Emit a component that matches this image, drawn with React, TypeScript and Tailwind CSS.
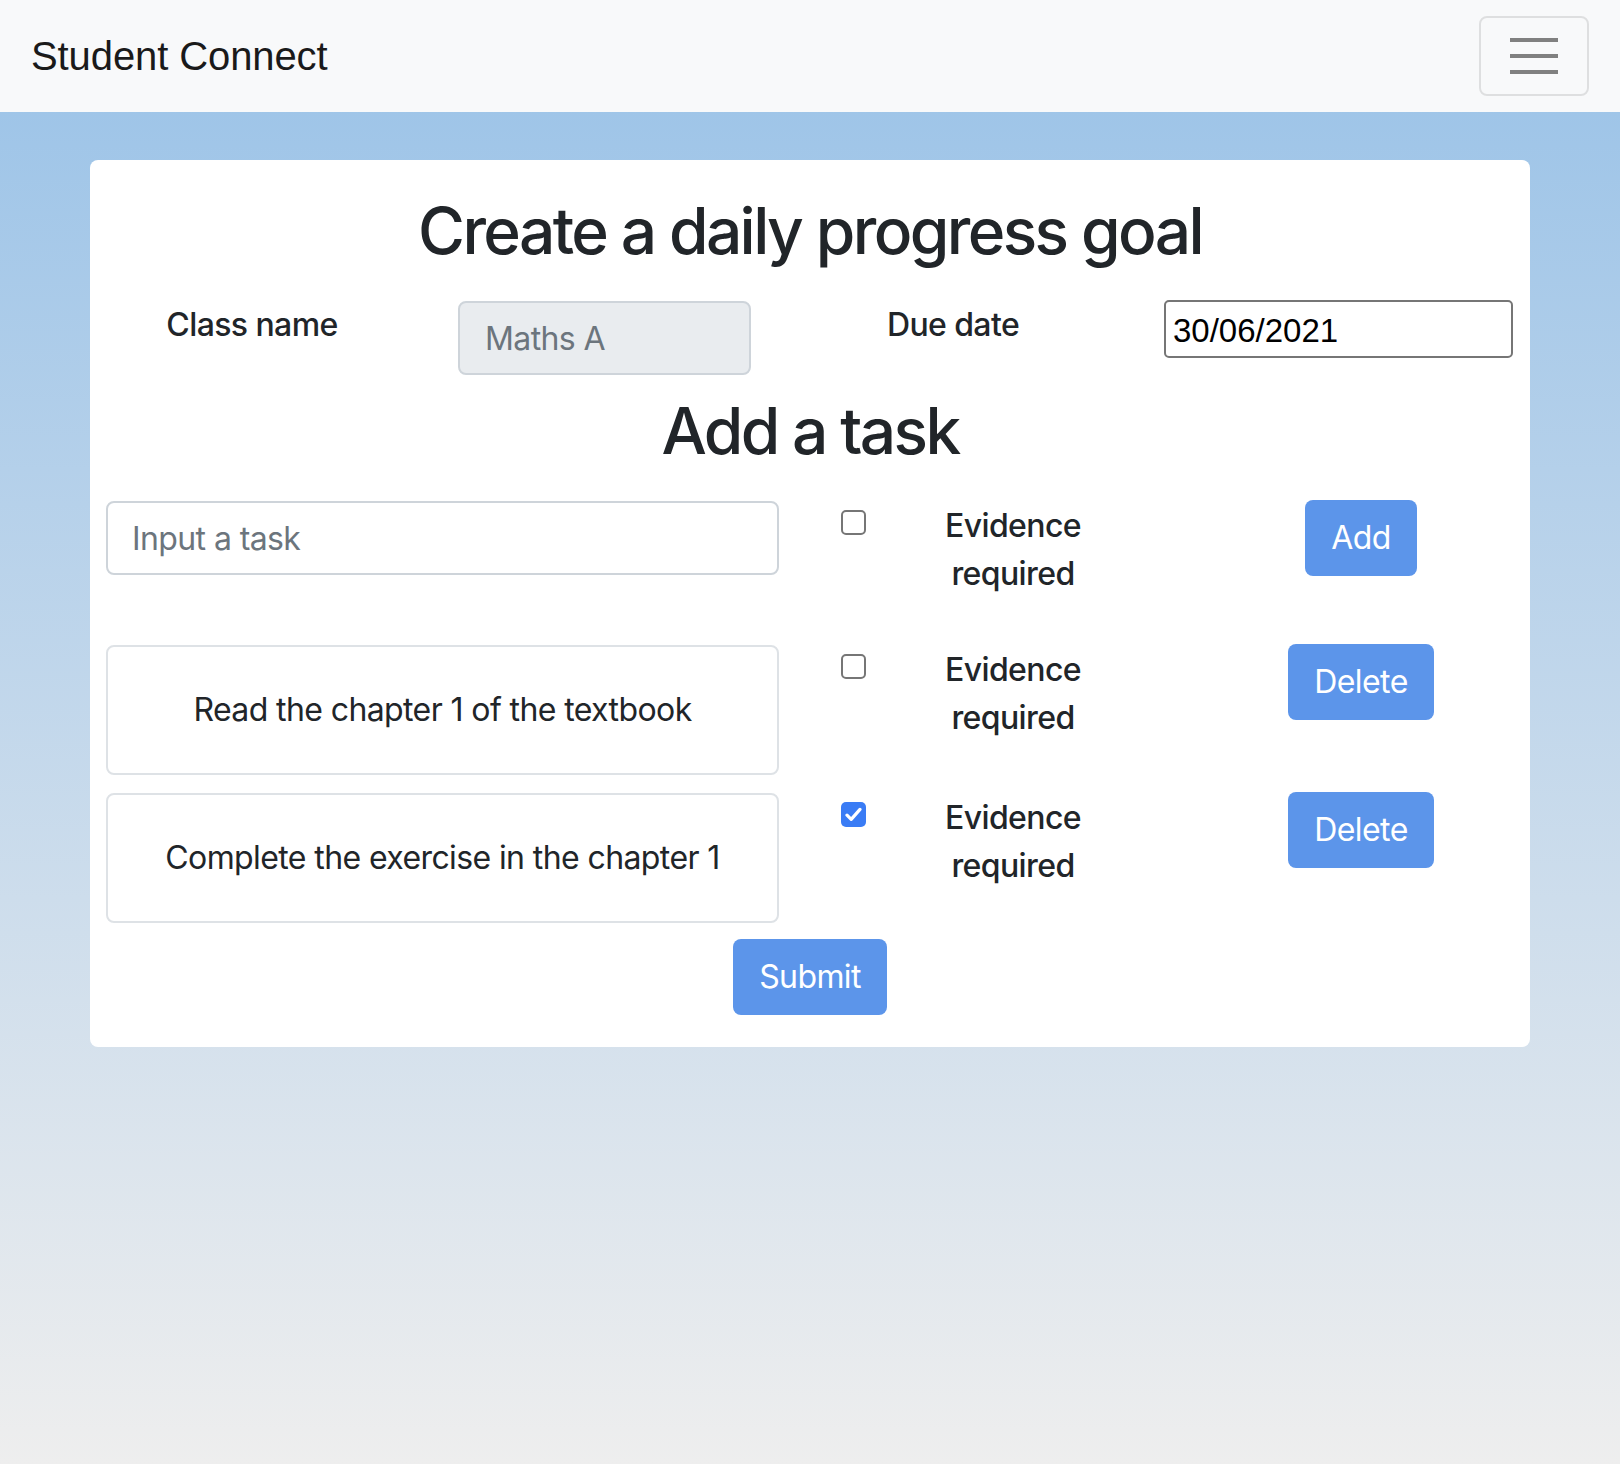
import React from "react";

const sans = { fontFamily: "Inter, 'Noto Sans', sans-serif" };

function Checkbox({ checked }: { checked?: boolean }) {
  if (checked) {
    return (
      <div className="mt-[10px] flex h-[25px] w-[25px] shrink-0 items-center justify-center rounded-[5px] bg-[#3a7cf5]">
        <svg width="17" height="15" viewBox="0 0 17 15" fill="none">
          <path d="M2 8.2 L6.2 12.4 L15 2.4" stroke="white" strokeWidth="3.2" strokeLinecap="round" strokeLinejoin="round" />
        </svg>
      </div>
    );
  }
  return <div className="mt-[10px] h-[25px] w-[25px] shrink-0 rounded-[5px] border-2 border-[#767676] bg-white" />;
}

function Evidence() {
  return (
    <div className="mt-[2px] w-[294px] shrink-0 text-center text-[32px] font-medium leading-[48px] tracking-[-0.6px] text-[#212529]">
      Evidence
      <br />
      required
    </div>
  );
}

function BlueButton({ label }: { label: string }) {
  return (
    <button className="rounded-[8px] bg-[#5c95ea] px-[26px] py-[14px] text-[32px] leading-[48px] tracking-[-0.6px] text-white">
      {label}
    </button>
  );
}

function TaskRow({ text, checked, className }: { text: string; checked?: boolean; className: string }) {
  return (
    <div className={"flex items-start pl-[16px] " + className}>
      <div className="mt-[1px] flex h-[130px] w-[673px] shrink-0 items-center justify-center rounded-[8px] border-2 border-[#dee2e6] text-[32px] leading-[48px] tracking-[-0.6px] text-[#212529]">
        {text}
      </div>
      <div className="ml-[62px]">
        <Checkbox checked={checked} />
      </div>
      <Evidence />
      <div className="ml-[32px] flex w-[338px] shrink-0 justify-center">
        <BlueButton label="Delete" />
      </div>
    </div>
  );
}

export default function App() {
  return (
    <div className="flex min-h-[1464px] flex-col" style={sans}>
      <nav className="flex h-[112px] shrink-0 items-center justify-between bg-[#f8f9fa] px-[31px]">
        <span
          className="text-[40px] leading-[60px] tracking-[-0.1px] text-[#1a1a1a]"
          style={{ fontFamily: "'Liberation Sans', Arial, sans-serif" }}
        >
          Student Connect
        </span>
        <button className="flex h-[80px] w-[110px] flex-col items-center justify-center gap-[12px] rounded-[8px] border-2 border-black/10">
          <span className="block h-[4px] w-[48px] bg-[#808080]" />
          <span className="block h-[4px] w-[48px] bg-[#808080]" />
          <span className="block h-[4px] w-[48px] bg-[#808080]" />
        </button>
      </nav>
      <main className="flex-1 bg-linear-to-b from-[#9fc5e8] to-[#eeeeee] pt-[48px]">
        <div className="mx-auto w-[1440px] rounded-[8px] bg-white pt-[33px] pb-[32px]">
          <h2 className="text-center text-[64px] font-medium leading-[1.2] tracking-[-2.6px] text-[#212529]">
            Create a daily progress goal
          </h2>

          <div className="mt-[31px] flex items-start pl-[16px]">
            <div className="w-[292px] shrink-0 text-center text-[32px] font-medium leading-[48px] tracking-[-0.6px] text-[#212529]">
              Class name
            </div>
            <div className="ml-[60px] flex h-[74px] w-[293px] shrink-0 items-center rounded-[8px] border-2 border-[#ced4da] bg-[#e9ecef] px-[25px] pt-[2px] text-[32px] tracking-[-0.6px] text-[#6c757d]">
              Maths A
            </div>
            <div className="ml-[55px] w-[294px] shrink-0 text-center text-[32px] font-medium leading-[48px] tracking-[-0.6px] text-[#212529]">
              Due date
            </div>
            <div
              className="ml-[64px] -mt-[1px] flex h-[58px] w-[349px] shrink-0 items-center rounded-[5px] border-2 border-[#767676] bg-white px-[7px] pt-[3px] text-[33px] text-black"
              style={{ fontFamily: "'Liberation Sans', Arial, sans-serif" }}
            >
              30/06/2021
            </div>
          </div>

          <h2 className="mt-[18px] text-center text-[64px] font-medium leading-[1.2] tracking-[-2.6px] text-[#212529]">
            Add a task
          </h2>

          <div className="mt-[30px] flex items-start pl-[16px]">
            <div className="mt-[1px] flex h-[74px] w-[673px] shrink-0 items-center rounded-[8px] border-2 border-[#ced4da] px-[24px] pt-[2px] text-[32px] tracking-[-0.6px] text-[#6c757d]">
              Input a task
            </div>
            <div className="ml-[62px]">
              <Checkbox />
            </div>
            <Evidence />
            <div className="ml-[32px] flex w-[338px] shrink-0 justify-center">
              <BlueButton label="Add" />
            </div>
          </div>

          <TaskRow className="mt-[46px]" text="Read the chapter 1 of the textbook" />
          <TaskRow className="mt-[17px]" text="Complete the exercise in the chapter 1" checked />

          <div className="mt-[16px] flex justify-center">
            <BlueButton label="Submit" />
          </div>
        </div>
      </main>
    </div>
  );
}
